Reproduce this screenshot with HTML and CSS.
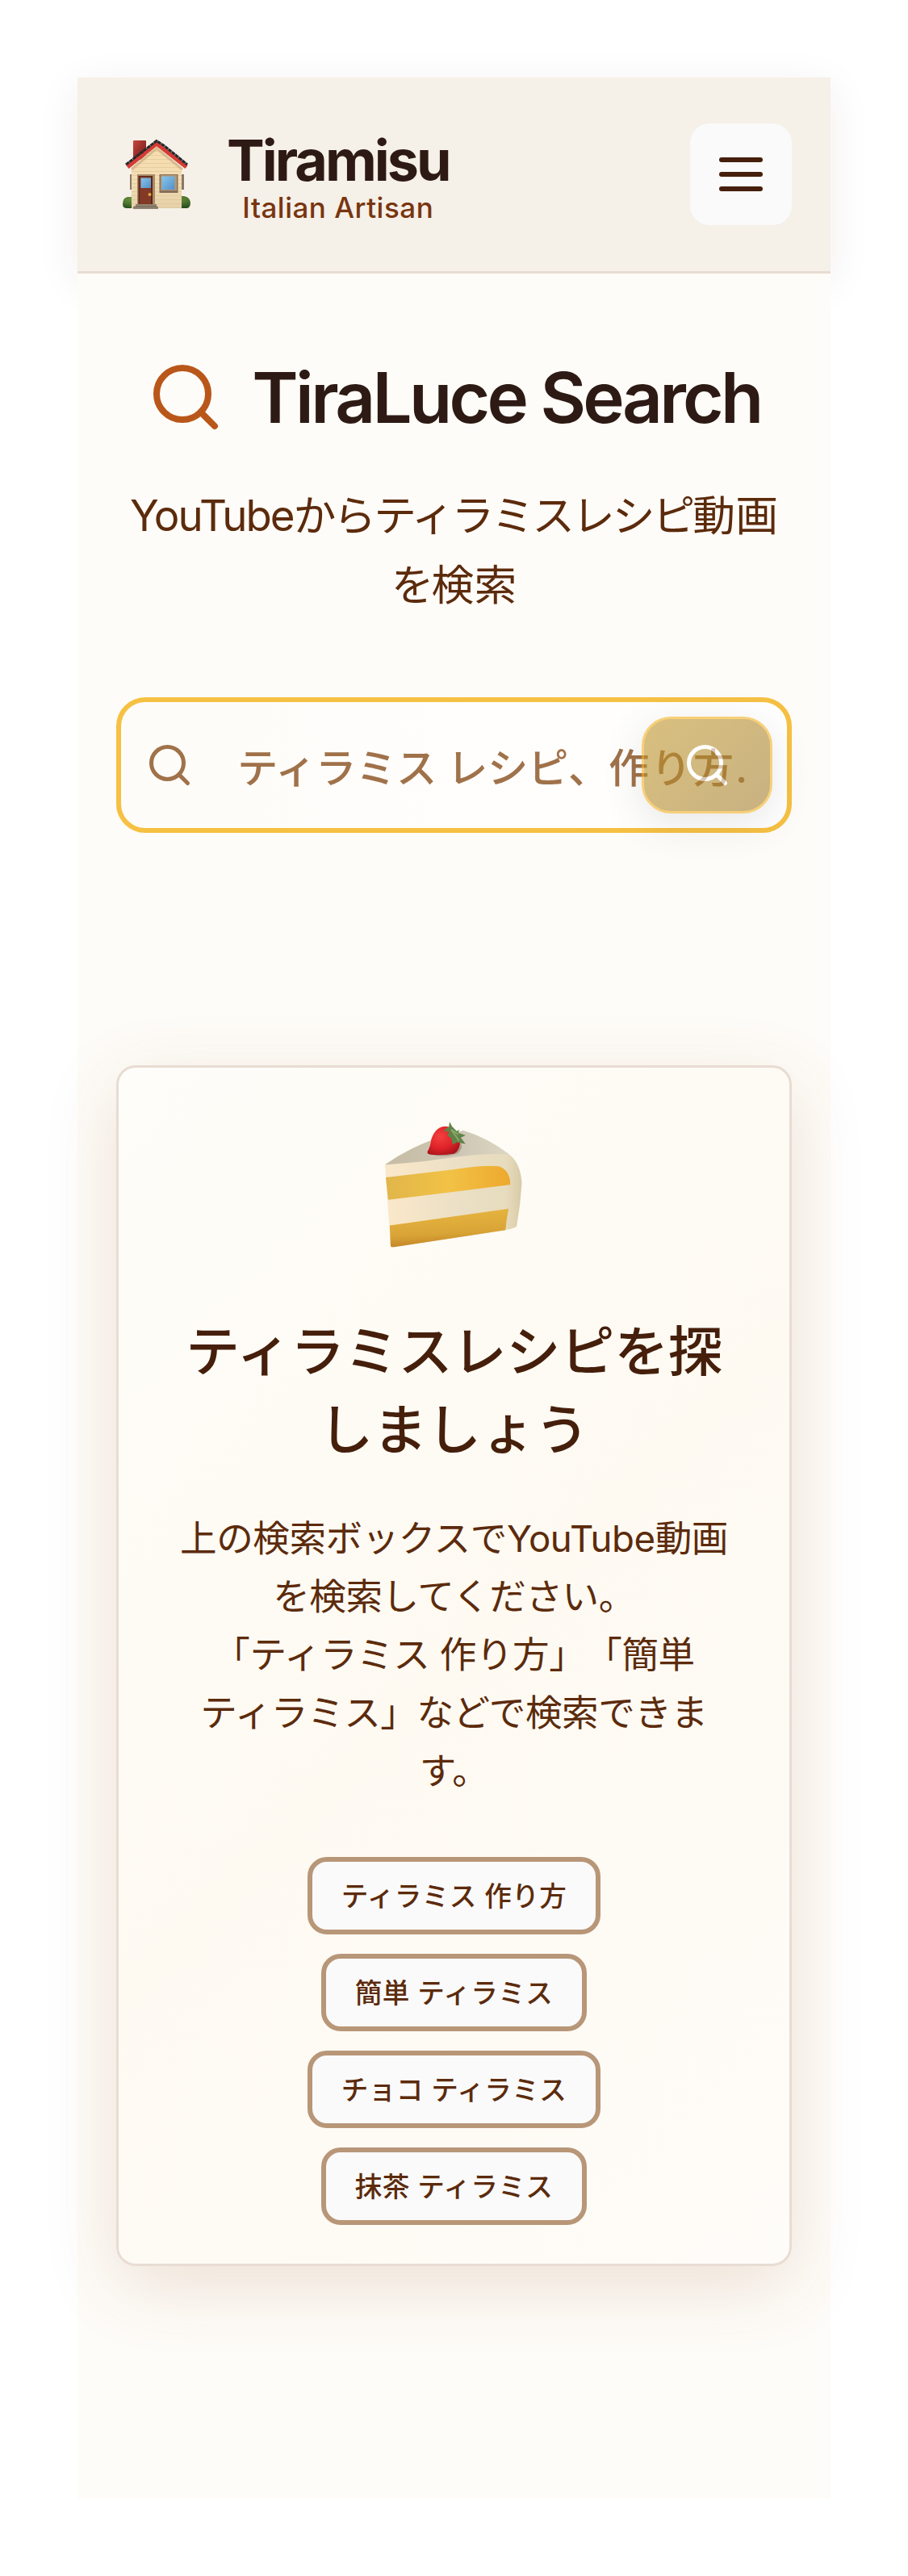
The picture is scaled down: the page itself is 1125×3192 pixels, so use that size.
FILE: index.html
```html
<!DOCTYPE html>
<html lang="ja">
<head>
<meta charset="utf-8">
<title>TiraLuce Search</title>
<link rel="stylesheet" href="styles.css">
</head>
<body>
<div class="page">
  <header class="header">
    <svg class="house" viewBox="0 0 84 86" aria-hidden="true">
      <defs>
        <linearGradient id="wall" x1="0" y1="0" x2="0" y2="1"><stop offset="0" stop-color="#f8deb0"/><stop offset=".6" stop-color="#f2dcb2"/><stop offset="1" stop-color="#e5d1aa"/></linearGradient>
        <linearGradient id="brick" x1="0" y1="0" x2="1" y2="1"><stop offset="0" stop-color="#c9443a"/><stop offset="1" stop-color="#681b18"/></linearGradient>
        <linearGradient id="glass" x1="0" y1="0" x2="1" y2="1"><stop offset="0" stop-color="#86c7ec"/><stop offset="1" stop-color="#558fc7"/></linearGradient>
        <radialGradient id="bush" cx=".45" cy=".25" r=".8"><stop offset="0" stop-color="#8fb550"/><stop offset="1" stop-color="#29521d"/></radialGradient>
        <pattern id="siding" width="8" height="5" patternUnits="userSpaceOnUse"><path d="M0 4.5H8" stroke="#d8bd90" stroke-width=".7" opacity=".7"/></pattern>
      </defs>
      <path d="M0 80Q0 72 6 71H12V85H5Q0 85 0 80zM84 78Q83 71 76 70H72V85H80Q84 84 84 78z" fill="url(#bush)"/>
      <rect x="13" y="1" width="16" height="24" rx="1" fill="url(#brick)"/>
      <path d="M9 43h3v19H9zM73 43h3v19h-3z" fill="#8a7966"/>
      <path d="M11 34L42 8L73 34V85H11z" fill="url(#wall)"/>
      <path d="M11 34L42 8L73 34V85H11z" fill="url(#siding)"/>
      <path d="M11 37L42 11L74 37" fill="none" stroke="#c2a77c" stroke-width="3" opacity=".6"/>
      <path d="M6 34L42 5L79 34" fill="none" stroke="#d53c35" stroke-width="5"/>
      <path d="M4 31L42 1.500L52 8L80 31" fill="none" stroke="#25282b" stroke-width="3" stroke-dasharray="5 .5"/>
      <path d="M18 43H40V81H18z" fill="#a98b69"/><path d="M19.500 45H37V80H19.500z" fill="#5b2519"/><path d="M21 46H35V80H21z" fill="#823925"/>
      <path d="M22.500 47.500H35V60H22.500z" fill="url(#glass)"/><circle cx="33.500" cy="68" r="2" fill="#e2a63e"/>
      <path d="M45.500 43H68.500V66H45.500z" fill="#86705a"/><path d="M47 44H67V63H47z" fill="#b49772"/><path d="M48.500 45.500H64.500V62H48.500z" fill="url(#glass)"/>
      <path d="M16 80H42V83H44V86H13V83H16z" fill="#918371"/><path d="M14 83H43" stroke="#625747" stroke-width=".7"/>
    </svg>
    <div class="brand">
      <div class="brand-name">Tiramisu</div>
      <div class="brand-sub">Italian Artisan</div>
    </div>
    <button class="menu" aria-label="メニュー"><i></i><i></i><i></i></button>
  </header>
  <main class="main">
    <h1 class="title">
      <svg class="title-icon" viewBox="0 0 24 24"><circle cx="11" cy="11" r="8"/><path d="M21 21l-4.350-4.350"/></svg>
      <span>TiraLuce Search</span>
    </h1>
    <p class="subtitle"><span class="latin">YouTube</span><span class="kana">からティラミスレシピ</span>動画<br><span class="kana">を</span>検索</p>
    <div class="search">
      <svg class="search-icon" viewBox="0 0 24 24"><circle cx="11" cy="11" r="8"/><path d="M21 21l-4.350-4.350"/></svg>
      <span class="placeholder">ティラミス レシピ、<span class="wide">作り方.</span></span>
      <button class="submit" aria-label="検索"><svg viewBox="0 0 24 24"><circle cx="11" cy="11" r="8"/><path d="M21 21l-4.350-4.350"/></svg></button>
    </div>
    <section class="card">
      <svg class="cake" viewBox="473 1388 176 160" aria-hidden="true">
        <defs>
          <linearGradient id="top" x1="0" y1="0" x2="1" y2="0"><stop offset="0" stop-color="#c6bca5"/><stop offset=".6" stop-color="#cec7b5"/><stop offset="1" stop-color="#ddd6c2"/></linearGradient>
          <linearGradient id="cream" x1="0" y1="0" x2="1" y2="0"><stop offset="0" stop-color="#fbe8ca"/><stop offset=".55" stop-color="#ebdfc5"/><stop offset=".88" stop-color="#e8dcbe"/><stop offset="1" stop-color="#d8cba8"/></linearGradient>
          <linearGradient id="sponge" x1="0" y1="0" x2="1" y2="0"><stop offset="0" stop-color="#e0b64b"/><stop offset=".5" stop-color="#f2c246"/><stop offset="1" stop-color="#eda92e"/></linearGradient>
          <linearGradient id="base" x1="0" y1="0" x2=".15" y2="1"><stop offset="0" stop-color="#e9b741"/><stop offset=".7" stop-color="#d9a436"/><stop offset="1" stop-color="#c38628"/></linearGradient>
          <radialGradient id="berry" cx=".4" cy=".35" r=".7"><stop offset="0" stop-color="#f3403e"/><stop offset=".6" stop-color="#df2229"/><stop offset="1" stop-color="#a8141b"/></radialGradient>
        </defs>
        <path d="M475 1443Q500 1425 531 1413L573 1400Q603 1409 632 1431Q645 1442 646.500 1466Q645 1493 640 1520Q639 1522 626 1525L488 1546Q482 1547 482 1544z" fill="url(#cream)"/>
        <path d="M475 1443Q500 1425 531 1413L573 1400Q603 1409 631 1430Q600 1428 550 1435Q510 1441 475 1443z" fill="url(#top)"/>
        <path d="M476 1459L560 1449Q600 1443 618 1445Q632 1450 632 1468L560 1477L479 1487z" fill="url(#sponge)"/>
        <path d="M481 1519L560 1508L630 1498Q627 1512 626 1525L488 1546Q482 1547 482 1544z" fill="url(#base)"/>
        <path d="M528 1429Q547 1435 566 1429Q574 1422 570 1416L530 1425z" fill="#8d7564" opacity=".5"/>
        <path d="M528 1427Q532 1420 533 1411Q539 1394 552 1395Q565 1397 569 1411Q570 1424 562 1429Q545 1432 531 1430Q528 1429 528 1427z" fill="url(#berry)"/>
        <path d="M556 1389L559 1395L565 1401L568 1399L567 1403L576 1406L570 1409L576 1417L565 1415L560 1418L558 1410L553 1406L556 1402L549 1401L552 1397L555 1396z" fill="#628249"/>
        <path d="M558 1399L568 1413M558 1399L567 1405" stroke="#89a767" stroke-width="2" fill="none"/>
      </svg>
      <h2 class="card-title">ティラミスレシピを探<br>しましょう</h2>
      <p class="card-text">上の検索ボックスでYouTube動画<br>を検索してください。<br>「ティラミス 作り方」「簡単<br>ティラミス」などで検索できま<br>す。</p>
      <div class="tags">
        <button class="tag">ティラミス 作り方</button>
        <button class="tag">簡単 ティラミス</button>
        <button class="tag">チョコ ティラミス</button>
        <button class="tag">抹茶 ティラミス</button>
      </div>
    </section>
  </main>
</div>
</body>
</html>
```
FILE: styles.css
```css
* { box-sizing: border-box; }
body {
  margin: 0;
  background: #fff;
  font-family: Inter, "Noto Sans CJK JP", sans-serif;
  text-spacing-trim: space-all;
}
h1, h2, p { margin: 0; }
button { font: inherit; padding: 0; border: 0; }
svg { display: block; flex: none; }
.page { width: 933px; margin: 96px auto; }
.header {
  display: flex;
  align-items: center;
  height: 243px;
  padding: 0 48px 0 56px;
  background: #f5f0e8;
  border-bottom: 3px solid #e8dcd3;
  box-shadow: 0 12px 48px rgba(92, 43, 30, 0.08);
}
.house { width: 84px; height: 86px; }
.brand { margin-left: 45px; padding-top: 4px; text-align: center; }
.brand-name {
  font-size: 70px;
  font-weight: 700;
  line-height: 78px;
  letter-spacing: -3px;
  color: #2e1a14;
}
.brand-sub { font-size: 35px; font-weight: 500; line-height: 38px; letter-spacing: 0.5px; color: #78350f; }
.menu {
  display: flex;
  flex-direction: column;
  align-items: center;
  justify-content: center;
  gap: 12px;
  width: 126px;
  height: 126px;
  margin-left: auto;
  border-radius: 24px;
  background: #fafafa;
}
.menu i { width: 54px; height: 6px; border-radius: 3px; background: #451f0b; }
.main { padding: 105px 48px 288px; background: #fefcf8; }
.title {
  display: flex;
  align-items: center;
  justify-content: center;
  gap: 34px;
  height: 96px;
  font-size: 87px;
  font-weight: 600;
  letter-spacing: -3.7px;
  white-space: nowrap;
  color: #2e1a14;
}
.title-icon { width: 96px; height: 96px; stroke: #b9571a; }
.title-icon, .search-icon, .submit svg { fill: none; stroke-width: 2; stroke-linecap: round; }
.subtitle {
  height: 173px;
  margin-top: 56px;
  font-size: 52.8px;
  line-height: 86.4px;
  text-align: center;
  white-space: nowrap;
  color: #5c2b0c;
}
.latin { letter-spacing: -2px; }
.kana { letter-spacing: -3px; }
.search {
  position: relative;
  display: flex;
  align-items: center;
  height: 168px;
  margin-top: 95px;
  padding-left: 30px;
  border: 6px solid #f6c143;
  border-radius: 36px;
  background: linear-gradient(90deg, #fefcf8, #fff);
}
.search-icon { width: 60px; height: 60px; stroke: #a0724a; }
.placeholder {
  margin-left: 54px;
  font-size: 50.4px;
  font-weight: 500;
  letter-spacing: -0.4px;
  white-space: nowrap;
  color: #a0724a;
}
.wide { letter-spacing: 2px; }
.submit {
  position: absolute;
  top: 18px;
  right: 18px;
  display: flex;
  align-items: center;
  justify-content: center;
  width: 162px;
  height: 120px;
  border: 3px solid #f3b121;
  border-radius: 36px;
  background: linear-gradient(135deg, #c0962b, #a57f2f);
  box-shadow: 0 12px 48px rgba(0, 0, 0, 0.15);
  opacity: 0.6;
}
.submit svg { width: 60px; height: 60px; stroke: #fff; }
.card {
  height: 1488px;
  margin-top: 288px;
  padding-top: 65px;
  border: 3px solid #e8dcd3;
  border-radius: 24px;
  background: linear-gradient(135deg, #fefdf9, #fefaf2 50%, #fefcf8);
  box-shadow: 0 24px 90px rgba(139, 69, 19, 0.15);
  text-align: center;
  white-space: nowrap;
}
.cake { width: 176px; height: 160px; margin: 0 auto; padding-right: 2px; }
.card-title {
  margin-top: 78px;
  font-size: 67.2px;
  font-weight: 500;
  line-height: 97.4px;
  letter-spacing: -0.3px;
  color: #451f0b;
}
.card-text {
  margin-top: 50px;
  font-size: 45.6px;
  line-height: 72px;
  letter-spacing: -0.45px;
  color: #5c2b0c;
}
.tags {
  display: flex;
  flex-direction: column;
  align-items: center;
  gap: 24px;
  margin-top: 70px;
}
.tag {
  height: 96px;
  padding: 0 36px 3px;
  border: 6px solid #b89678;
  border-radius: 24px;
  background: #fafafa;
  font-size: 33.6px;
  font-weight: 500;
  letter-spacing: 0.45px;
  color: #5c2b0c;
}
```
